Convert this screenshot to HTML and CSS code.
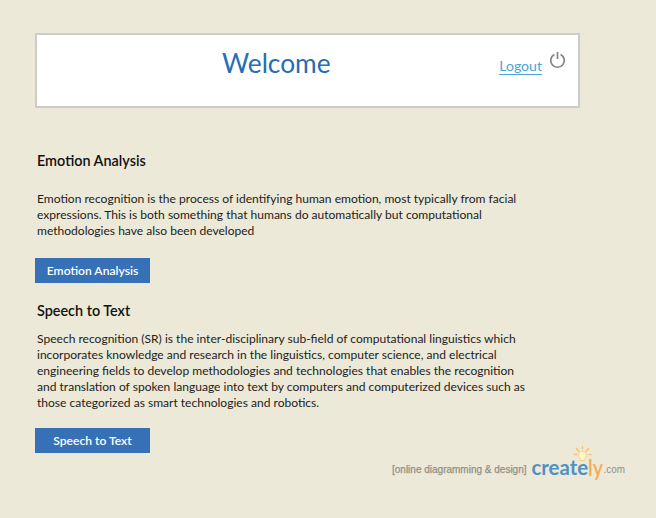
FILE: index.html
```html
<!DOCTYPE html>
<html lang="en">
<head>
<meta charset="utf-8">
<title>Welcome</title>
<link rel="stylesheet" href="styles.css">
</head>
<body>
<header class="banner">
  <h1 class="title">Welcome</h1>
  <div class="account">
    <a class="logout" href="#">Logout</a>
    <svg class="power" width="17" height="17" viewBox="0 0 17 17"><path d="M5.4 2.4A6.8 6.8 0 1 0 11.6 2.4M8.5 0V7" fill="none" stroke="#838383" stroke-width="1.7"/></svg>
  </div>
</header>
<main>
  <section class="emotion">
    <h2>Emotion Analysis</h2>
    <p>Emotion recognition is the process of identifying human emotion, most typically from facial<br>expressions. This is both something that humans do automatically but computational<br>methodologies have also been developed</p>
    <button class="button">Emotion Analysis</button>
  </section>
  <section class="speech">
    <h2>Speech to Text</h2>
    <p>Speech recognition (SR) is the inter-disciplinary sub-field of computational linguistics which<br>incorporates knowledge and research in the linguistics, computer science, and electrical<br>engineering fields to develop methodologies and technologies that enables the recognition<br>and translation of spoken language into text by computers and computerized devices such as<br>those categorized as smart technologies and robotics.</p>
    <button class="button">Speech to Text</button>
  </section>
</main>
<footer class="credit">
  <span class="tagline">[online diagramming &amp; design]</span>
  <svg class="logo" width="98" height="40" viewBox="0 0 98 40">
    <g stroke="#f6c172" stroke-width="1.5" stroke-linecap="round"><path d="M50.5 1.5V3.5M44.5 3.5L46.5 6M56.5 3.5L54.5 6M42 9.5H44.5M57 9.5H59"/></g>
    <path d="M48.5 15.5C48.5 13.5 46.5 12.5 46.5 10A4 4 0 0 1 54.5 10C54.5 12.5 52.5 13.5 52.5 15.5Z" fill="#fff9c9" stroke="#f3cf85"/>
    <text class="create" x="-0.5" y="29.5" textLength="56.5" lengthAdjust="spacingAndGlyphs">create</text>
    <text class="ly" x="56" y="30.5" textLength="15" lengthAdjust="spacingAndGlyphs">ly</text>
    <text class="com" x="71.5" y="28" textLength="21.5" lengthAdjust="spacingAndGlyphs">.com</text>
  </svg>
</footer>
</body>
</html>
```
FILE: styles.css
```css
* { box-sizing: border-box; }
body {
  margin: 0;
  padding: 33px 0 0 35px;
  width: 656px;
  height: 518px;
  overflow: hidden;
  background: #ece9d8;
  color: #1c1c1a;
  font-family: Lato, Carlito, sans-serif;
}
.banner {
  display: grid;
  grid-template-columns: 1fr auto;
  width: 545px;
  height: 75px;
  padding: 0 12px 0 185px;
  border: 2px solid #ccc;
  background: #fff;
}
.title {
  margin: 10px 0 0;
  font-size: 26.3px;
  font-weight: 400;
  line-height: 36px;
  color: #256db5;
}
.account { display: flex; align-items: flex-start; gap: 7px; padding-top: 17px; }
.logout {
  margin-top: 6px;
  font-size: 14.1px;
  line-height: 16px;
  color: #4da3d9;
  text-decoration: none;
  border-bottom: 1px solid #4da3d9;
}
h2 { margin: 0; padding-left: 2px; font-size: 14.4px; line-height: 20px; font-weight: 600; color: #111; }
p { margin: 0; padding-left: 2px; font-size: 12.05px; line-height: 16px; white-space: nowrap; }
.emotion { padding-top: 43px; }
.emotion p { margin: 20px 0 19px; }
.speech { padding-top: 18px; }
.speech p { margin: 10px 0 17px; }
.button {
  display: block;
  width: 115px;
  height: 25px;
  padding: 0;
  border: 0;
  background: #3671b7;
  color: #fff;
  font: 600 12.1px/25px Lato, Carlito, sans-serif;
}
.credit { display: flex; align-items: flex-start; margin-top: -8px; padding-left: 357px; }
.tagline { width: 140px; padding-top: 19px; font: 400 10px/12px "Liberation Sans", sans-serif; -webkit-text-stroke: .25px #929084; color: #929084; white-space: nowrap; }
.logo { flex: none; }
.create { font: 700 21.5px Lato, sans-serif; fill: #4f91c2; }
.ly { font: 600 22px Lato, sans-serif; fill: #f5ac58; }
.com { font: 10.5px "Liberation Sans", sans-serif; fill: #929084; }
```
